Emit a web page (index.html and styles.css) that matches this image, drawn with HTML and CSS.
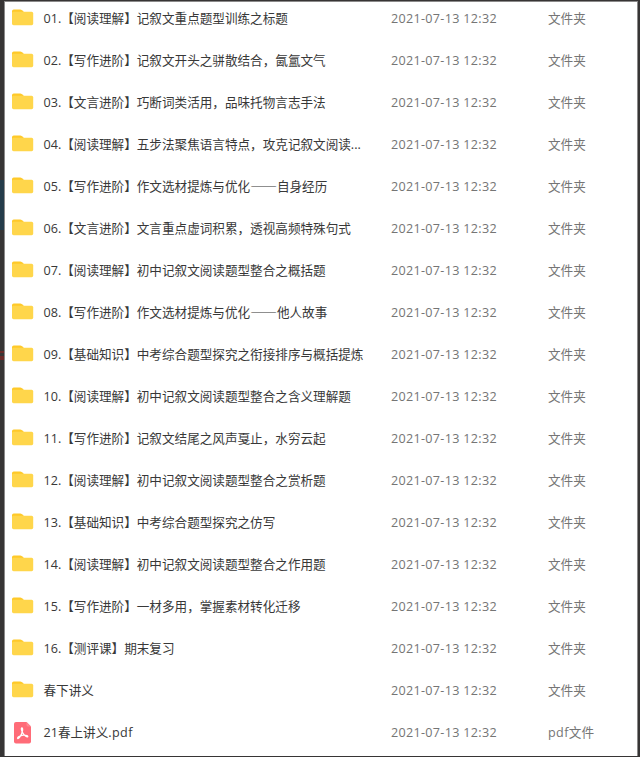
FILE: index.html
```html
<!DOCTYPE html>
<html lang="zh-CN">
<head>
    <meta charset="UTF-8">
    <meta name="viewport" content="width=device-width, initial-scale=1.0">
    <title>文件列表</title>
    <link rel="stylesheet" href="styles.css">
</head>
<body>
    <svg class="symbols" xmlns="http://www.w3.org/2000/svg">
        <symbol id="folder" viewBox="0 0 22 17">
            <path d="M0 2.2Q0 .5 1.7 .5H8.2Q9.2 .5 10 1.2L12 3V8H0z" fill="#ffc928"/>
            <path d="M0 4.2Q0 2.8 1.5 2.8H19.7Q21.2 2.8 21.2 4.4V14.6Q21.2 16.2 19.7 16.2H1.6Q0 16.2 0 14.6z" fill="#ffd64b"/>
        </symbol>
        <symbol id="pdf" viewBox="0 0 18 22">
            <path d="M2 0H12.5L17 4.5V19.5Q17 21.5 15 21.5H2Q0 21.5 0 19.5V2Q0 0 2 0z" fill="#ff6c78"/>
            <path d="M12.5 0L17 4.5H14Q12.5 4.5 12.5 3z" fill="#ff8790"/>
            <path d="M7.9 6C9.2 6 8.5 9.5 7.5 12C6.4 14.5 4.6 17 3.7 16.4C2.8 15.4 6.3 13.6 9.3 13.2C12.3 12.9 14.2 13.8 13.7 14.7C13 15.5 10.1 13.3 8.8 11C7.5 8.8 6.9 6 7.9 6z" fill="none" stroke="#fff" stroke-width="1.3" stroke-linejoin="round"/>
        </symbol>
    </svg>
    <div class="panel">
        <ul class="files">
            <li class="file"><svg class="icon"><use href="#folder"/></svg><span class="name">01.【阅读理解】记叙文重点题型训练之标题</span><span class="date">2021-07-13 12:32</span><span class="type">文件夹</span></li>
            <li class="file"><svg class="icon"><use href="#folder"/></svg><span class="name">02.【写作进阶】记叙文开头之骈散结合，氤氲文气</span><span class="date">2021-07-13 12:32</span><span class="type">文件夹</span></li>
            <li class="file"><svg class="icon"><use href="#folder"/></svg><span class="name">03.【文言进阶】巧断词类活用，品味托物言志手法</span><span class="date">2021-07-13 12:32</span><span class="type">文件夹</span></li>
            <li class="file"><svg class="icon"><use href="#folder"/></svg><span class="name">04.【阅读理解】五步法聚焦语言特点，攻克记叙文阅读...</span><span class="date">2021-07-13 12:32</span><span class="type">文件夹</span></li>
            <li class="file"><svg class="icon"><use href="#folder"/></svg><span class="name">05.【写作进阶】作文选材提炼与优化<span class="dash">——</span>自身经历</span><span class="date">2021-07-13 12:32</span><span class="type">文件夹</span></li>
            <li class="file"><svg class="icon"><use href="#folder"/></svg><span class="name">06.【文言进阶】文言重点虚词积累，透视高频特殊句式</span><span class="date">2021-07-13 12:32</span><span class="type">文件夹</span></li>
            <li class="file"><svg class="icon"><use href="#folder"/></svg><span class="name">07.【阅读理解】初中记叙文阅读题型整合之概括题</span><span class="date">2021-07-13 12:32</span><span class="type">文件夹</span></li>
            <li class="file"><svg class="icon"><use href="#folder"/></svg><span class="name">08.【写作进阶】作文选材提炼与优化<span class="dash">——</span>他人故事</span><span class="date">2021-07-13 12:32</span><span class="type">文件夹</span></li>
            <li class="file"><svg class="icon"><use href="#folder"/></svg><span class="name">09.【基础知识】中考综合题型探究之衔接排序与概括提炼</span><span class="date">2021-07-13 12:32</span><span class="type">文件夹</span></li>
            <li class="file"><svg class="icon"><use href="#folder"/></svg><span class="name">10.【阅读理解】初中记叙文阅读题型整合之含义理解题</span><span class="date">2021-07-13 12:32</span><span class="type">文件夹</span></li>
            <li class="file"><svg class="icon"><use href="#folder"/></svg><span class="name">11.【写作进阶】记叙文结尾之风声戛止，水穷云起</span><span class="date">2021-07-13 12:32</span><span class="type">文件夹</span></li>
            <li class="file"><svg class="icon"><use href="#folder"/></svg><span class="name">12.【阅读理解】初中记叙文阅读题型整合之赏析题</span><span class="date">2021-07-13 12:32</span><span class="type">文件夹</span></li>
            <li class="file"><svg class="icon"><use href="#folder"/></svg><span class="name">13.【基础知识】中考综合题型探究之仿写</span><span class="date">2021-07-13 12:32</span><span class="type">文件夹</span></li>
            <li class="file"><svg class="icon"><use href="#folder"/></svg><span class="name">14.【阅读理解】初中记叙文阅读题型整合之作用题</span><span class="date">2021-07-13 12:32</span><span class="type">文件夹</span></li>
            <li class="file"><svg class="icon"><use href="#folder"/></svg><span class="name">15.【写作进阶】一材多用，掌握素材转化迁移</span><span class="date">2021-07-13 12:32</span><span class="type">文件夹</span></li>
            <li class="file"><svg class="icon"><use href="#folder"/></svg><span class="name">16.【测评课】期末复习</span><span class="date">2021-07-13 12:32</span><span class="type">文件夹</span></li>
            <li class="file"><svg class="icon"><use href="#folder"/></svg><span class="name">春下讲义</span><span class="date">2021-07-13 12:32</span><span class="type">文件夹</span></li>
            <li class="file"><svg class="icon pdf"><use href="#pdf"/></svg><span class="name">21春上讲义<span class="ext">.pdf</span></span><span class="date">2021-07-13 12:32</span><span class="type"><span class="ext">pdf</span>文件</span></li>
        </ul>
    </div>
</body>
</html>
```

FILE: styles.css
```css
:root {
    --bg: #373535;
    --blue: #243c4a;
    --red: #6b2a28;
    --fg: #383838;
    --muted: #757575;
}

* {
    margin: 0;
    padding: 0;
    box-sizing: border-box;
}

body {
    height: 757px;
    padding: 1px 2px 1px 4px;
    overflow: hidden;
    background-color: var(--bg);
    background-image: linear-gradient(transparent 180px, var(--blue) 180px, var(--blue) 230px, transparent 230px, transparent 351px, var(--red) 351px, var(--red) 353px, transparent 353px, transparent 356px, var(--red) 356px, var(--red) 360px, transparent 360px);
    background-size: 4px 100%;
    background-repeat: no-repeat;
    font-family: "Open Sans", "Noto Sans CJK SC", sans-serif;
    font-size: 12.6px;
    text-spacing-trim: space-all;
}

.symbols {
    display: none;
}

.panel {
    height: 755px;
    overflow: hidden;
    background-color: #fff;
    border: 1px solid #8b8a8a;
    border-bottom: none;
}

.files {
    list-style: none;
    margin-top: -4px;
}

.file {
    display: grid;
    grid-template-columns: 38px 348px 157px 1fr;
    align-items: center;
    height: 42px;
    line-height: 20px;
    white-space: nowrap;
    color: var(--fg);
}

.icon {
    width: 22px;
    height: 17px;
    margin: 0 0 3px 7px;
}

.icon.pdf {
    width: 18px;
    height: 22px;
    margin: 0 0 1px 9px;
}

.name {
    padding-left: 0.5px;
}

.dash {
    font-family: "Noto Sans CJK SC", sans-serif;
    font-size: 13.4px;
    line-height: 1;
}

.ext {
    letter-spacing: 0.4px;
}

.date,
.type {
    color: var(--muted);
}

.date {
    letter-spacing: 0.3px;
}
```
